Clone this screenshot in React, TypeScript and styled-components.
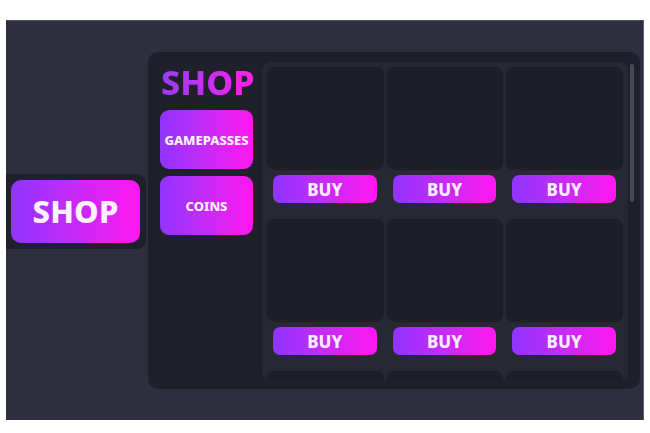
import React from "react";
import styled, { createGlobalStyle } from "styled-components";

const Global = createGlobalStyle`
  html, body { margin: 0; padding: 0; background: #ffffff; }
  body { font-family: "Noto Sans", "Open Sans", sans-serif; }
  * { box-sizing: border-box; }
`;

const gradient = "linear-gradient(90deg, #8f34ff 0%, #c82af8 50%, #ff17ef 100%)";

const Screen = styled.div`
  margin: 20px 0 0 6px;
  width: 638px;
  height: 400px;
  background: #2e2e3f;
  border-top: 1px solid #4d4d5c;
  border-right: 1px solid #5e5e6a;
  display: flex;
  align-items: center;
  gap: 2px;
`;

const SidePanel = styled.div`
  width: 140px;
  padding: 6px 6px 6px 5px;
  margin-bottom: 19px;
  background: #1f2029;
  border-radius: 0 9px 9px 0;
`;

const BigButton = styled.button`
  width: 129px;
  height: 63px;
  border: none;
  border-radius: 10px;
  background: ${gradient};
  color: #fbf2ff;
  font-family: "Noto Sans", sans-serif;
  font-weight: 800;
  font-size: 31px;
  letter-spacing: 0.2px;
  display: flex;
  align-items: center;
  justify-content: center;
  padding: 0;
  cursor: pointer;
`;

const Panel = styled.div`
  width: 492px;
  height: 337px;
  background: #1f2029;
  border-radius: 10px;
  display: flex;
  padding: 10px 6px 9px 12px;
  gap: 9px;
`;

const Sidebar = styled.div`
  width: 93px;
  display: flex;
  flex-direction: column;
  gap: 7px;
  padding-top: 3px;
`;

const Title = styled.h1`
  margin: 0 0 4px 1px;
  font-size: 34px;
  line-height: 34px;
  font-weight: 800;
  background: linear-gradient(90deg, #9a3cf6 0%, #d02cf0 60%, #ff1fe8 100%);
  -webkit-background-clip: text;
  background-clip: text;
  color: transparent;
  width: max-content;
`;

const NavButton = styled.button`
  width: 93px;
  height: 59px;
  border: none;
  border-radius: 9px;
  background: ${gradient};
  color: #fbf0ff;
  font-family: "Noto Sans", sans-serif;
  font-weight: 800;
  font-size: 13px;
  padding: 0;
  display: flex;
  align-items: center;
  justify-content: center;
  cursor: pointer;
`;

const ScrollArea = styled.div`
  width: 366px;
  height: 318px;
  overflow: hidden;
  border-radius: 8px;
`;

const ScrollTrack = styled.div`
  width: 4px;
  height: 318px;
  margin-left: -7px;
  padding-top: 2px;
  display: flex;
  flex-direction: column;
`;

const ScrollThumb = styled.div`
  width: 4px;
  height: 138px;
  border-radius: 2px;
  background: #454857;
`;

const Grid = styled.div`
  background: #272833;
  border-radius: 8px;
  padding: 5px;
  display: grid;
  grid-template-columns: repeat(3, 1fr);
  column-gap: 3px;
  row-gap: 16px;
`;

const Cell = styled.div`
  display: flex;
  flex-direction: column;
  gap: 5px;
`;

const Card = styled.div`
  height: 103px;
  background: #1d1e27;
  border-radius: 8px;
`;

const BuyButton = styled.button`
  height: 28px;
  margin: 0 7px 0 6px;
  border: none;
  border-radius: 7px;
  background: ${gradient};
  color: #f8ecff;
  font-family: "Noto Sans", sans-serif;
  font-weight: 800;
  font-size: 17px;
  padding: 0;
  display: flex;
  align-items: center;
  justify-content: center;
  cursor: pointer;
`;

const items = Array.from({ length: 9 }, (_, i) => i);

export default function App() {
  return (
    <>
      <Global />
      <Screen>
        <SidePanel>
          <BigButton>SHOP</BigButton>
        </SidePanel>
        <Panel>
          <Sidebar>
            <Title>SHOP</Title>
            <NavButton>GAMEPASSES</NavButton>
            <NavButton>COINS</NavButton>
          </Sidebar>
          <ScrollArea>
            <Grid>
              {items.map((i) => (
                <Cell key={i}>
                  <Card />
                  <BuyButton>BUY</BuyButton>
                </Cell>
              ))}
            </Grid>
          </ScrollArea>
          <ScrollTrack>
            <ScrollThumb />
          </ScrollTrack>
        </Panel>
      </Screen>
    </>
  );
}
